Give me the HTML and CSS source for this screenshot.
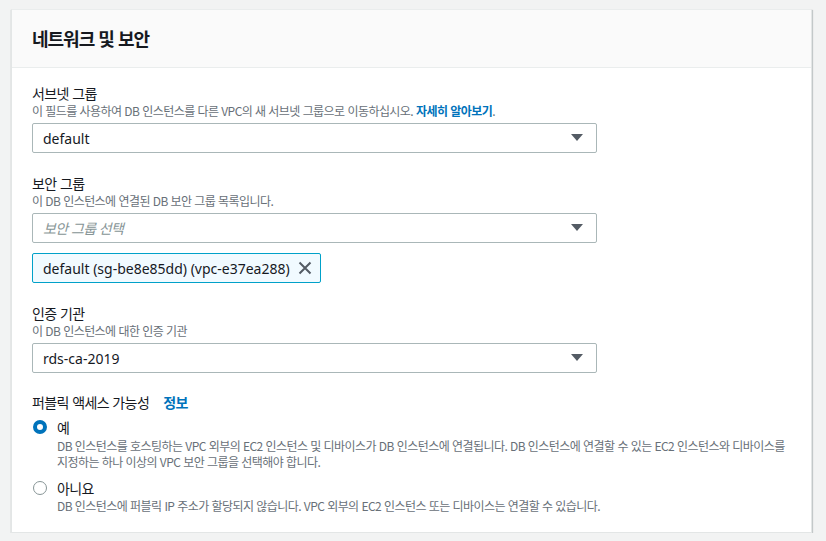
FILE: index.html
```html
<!DOCTYPE html>
<html lang="ko">
<head>
<meta charset="utf-8">
<link rel="stylesheet" href="styles.css">
</head>
<body>
<div class="card">
  <div class="card-header"><h2 class="title">네트워크 및 보안</h2></div>
  <div class="card-body">
    <div class="field f1">
      <div class="label">서브넷 그룹</div>
      <div class="desc">이 필드를 사용하여 DB 인스턴스를 다른 VPC의 새 서브넷 그룹으로 이동하십시오. <a class="link">자세히 알아보기</a>.</div>
      <div class="select"><span class="value">default</span><svg class="caret" width="12" height="8" viewBox="0 0 12 8"><path d="M0 0H12L6 7Z" fill="#545b64"/></svg></div>
    </div>
    <div class="field f2">
      <div class="label">보안 그룹</div>
      <div class="desc">이 DB 인스턴스에 연결된 DB 보안 그룹 목록입니다.</div>
      <div class="select"><span class="placeholder">보안 그룹 선택</span><svg class="caret" width="12" height="8" viewBox="0 0 12 8"><path d="M0 0H12L6 7Z" fill="#545b64"/></svg></div>
      <div class="token"><span class="value">default (sg-be8e85dd) (vpc-e37ea288)</span><svg class="x" width="14" height="14" viewBox="0 0 14 14"><path d="M1.5 1.5L12.5 12.5M12.5 1.5L1.5 12.5" stroke="#545b64" stroke-width="2" fill="none"/></svg></div>
    </div>
    <div class="field f3">
      <div class="label">인증 기관</div>
      <div class="desc">이 DB 인스턴스에 대한 인증 기관</div>
      <div class="select"><span class="value">rds-ca-2019</span><svg class="caret" width="12" height="8" viewBox="0 0 12 8"><path d="M0 0H12L6 7Z" fill="#545b64"/></svg></div>
    </div>
    <div class="field f4">
      <div class="label">퍼블릭 액세스 가능성<a class="info">정보</a></div>
      <div class="radio-group">
        <div class="radio">
          <div class="radio-row"><span class="circle checked"></span><span class="radio-label">예</span></div>
          <div class="radio-desc">DB 인스턴스를 호스팅하는 VPC 외부의 EC2 인스턴스 및 디바이스가 DB 인스턴스에 연결됩니다. DB 인스턴스에 연결할 수 있는 EC2 인스턴스와 디바이스를 지정하는 하나 이상의 VPC 보안 그룹을 선택해야 합니다.</div>
        </div>
        <div class="radio">
          <div class="radio-row"><span class="circle"></span><span class="radio-label">아니요</span></div>
          <div class="radio-desc">DB 인스턴스에 퍼블릭 IP 주소가 할당되지 않습니다. VPC 외부의 EC2 인스턴스 또는 디바이스는 연결할 수 있습니다.</div>
        </div>
      </div>
    </div>
  </div>
</div>
</body>
</html>
```

FILE: styles.css
```css
* { box-sizing: border-box; }
html, body { margin: 0; padding: 0; }
body {
  background: #f2f3f3;
  font-family: "Noto Sans", "Noto Sans CJK KR", sans-serif;
  color: #16191f;
  padding: 9px 14px 0 11px;
}
.card {
  width: 801px;
  background: #fff;
  border: 1px solid #e3e6e6;
  border-top-color: #eaeded;
  box-shadow: 0 1px 1px 0 rgba(0,28,36,.3), 1px 1px 1px 0 rgba(0,28,36,.15);
}
.card-header {
  background: #fafafa;
  border-bottom: 1px solid #eaeded;
  height: 58px;
  padding: 0 20px 1px;
  display: flex;
  align-items: center;
}
.title {
  margin: 0;
  font-size: 18px;
  font-weight: 700;
  line-height: 22px;
  letter-spacing: -1px;
  font-family: "Noto Sans CJK KR", sans-serif;
}
.card-body {
  padding: 15px 20px 18px 20px;
  display: flex;
  flex-direction: column;
}
.field { display: flex; flex-direction: column; }
.f2, .f3 { margin-top: 20px; }
.f4 { margin-top: 19px; }
.label {
  font-size: 14px;
  line-height: 20px;
  letter-spacing: -0.6px;
  font-family: "Noto Sans CJK KR", sans-serif;
  display: flex;
  align-items: center;
}
.desc {
  font-size: 12px;
  line-height: 16px;
  letter-spacing: -0.55px;
  color: #687078;
  font-family: "Noto Sans CJK KR", sans-serif;
  margin-bottom: 4px;
  word-break: keep-all;
}
.link, .info {
  color: #0073bb;
  font-weight: 700;
}
.info { margin-left: 14px; }
.select {
  width: 565px;
  height: 30px;
  border: 1px solid #aab7b8;
  border-radius: 2px;
  display: flex;
  align-items: center;
  justify-content: space-between;
  padding: 0 13px 0 10px;
  background: #fff;
}
.value { font-size: 14px; font-family: "Noto Sans", sans-serif; }
.placeholder {
  font-size: 14px;
  font-style: italic;
  letter-spacing: -0.6px;
  color: #879596;
  font-family: "Noto Sans CJK KR", sans-serif;
}
.caret { display: block; }
.token {
  margin-top: 10px;
  width: 289px;
  height: 30px;
  border: 1px solid #00a1c9;
  border-radius: 2px;
  background: #f1faff;
  display: flex;
  align-items: center;
  justify-content: space-between;
  padding: 0 8px 0 10px;
}
.x { display: block; }
.radio-group { display: flex; flex-direction: column; margin-top: 6px; }
.radio + .radio { margin-top: 9px; }
.radio-row { display: flex; align-items: center; height: 18px; }
.circle {
  width: 14px;
  height: 14px;
  border-radius: 50%;
  border: 1px solid #879596;
  margin-left: 1px;
  margin-right: 10px;
  background: #fff;
}
.circle.checked { border: 4px solid #0073bb; }
.radio-label {
  font-size: 14px;
  line-height: 18px;
  letter-spacing: -0.6px;
  font-family: "Noto Sans CJK KR", sans-serif;
}
.radio-desc {
  font-size: 12px;
  line-height: 16px;
  letter-spacing: -0.55px;
  color: #687078;
  margin-left: 25px;
  margin-top: 2px;
  word-break: keep-all;
  font-family: "Noto Sans CJK KR", sans-serif;
}
.radio + .radio .radio-desc { margin-top: 1px; }
```
